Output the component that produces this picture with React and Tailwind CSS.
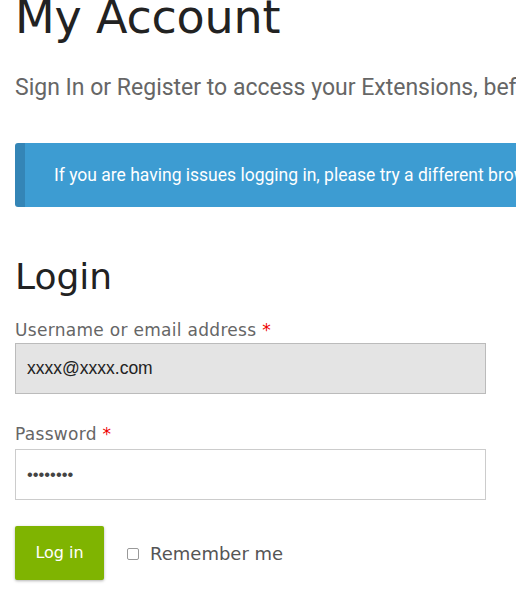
export default function App() {
  const mont = "font-['DejaVu_Sans','Noto_Sans',sans-serif]";
  const roboto = "font-['Roboto',sans-serif]";
  const arial = "font-['Liberation_Sans',Arial,sans-serif]";
  return (
    <div className="w-[516px] h-[597px] overflow-hidden bg-white">
      <div className="w-[900px] pl-[15px]">
        <h1
          className={`${mont} text-[46px] leading-[46px] text-[#222] -mt-[6px] font-normal tracking-[-0.2px]`}
        >
          My Account
        </h1>
        <p className={`${roboto} mt-[35px] text-[23px] leading-[26px] text-[#666] font-normal`}>
          Sign In or Register to access your Extensions, before you can proceed.
        </p>
        <div className="mt-[42px] h-[64px] flex items-center bg-[#3d9cd2] border-l-[10px] border-[#3485b6] rounded-l-[3px] pl-[29px]">
          <span className={`${roboto} text-white text-[17.5px]`}>
            If you are having issues logging in, please try a different browser.
          </span>
        </div>
        <h2 className={`${mont} mt-[50px] text-[36px] leading-[40px] text-[#222] font-normal`}>
          Login
        </h2>
        <form className="w-[471px]">
          <label className={`${mont} block mt-[23px] text-[17px] tracking-[0.3px] leading-[20px] text-[#666]`}>
            Username or email address <span className="text-[#e00]">*</span>
          </label>
          <div
            className={`${arial} mt-[3px] h-[51px] bg-[#e4e4e4] border border-[#bbb] flex items-center pl-[11px] text-[17.5px] text-[#222]`}
          >
            xxxx@xxxx.com
          </div>
          <label className={`${mont} block mt-[30px] text-[17px] tracking-[0.3px] leading-[20px] text-[#666]`}>
            Password <span className="text-[#e00]">*</span>
          </label>
          <div
            className={`${arial} mt-[5px] h-[51px] bg-white border border-[#ccc] flex items-center pl-[11px] text-[16.5px] text-[#444]`}
          >
            ••••••••
          </div>
          <div className="mt-[26px] flex items-center">
            <button
              type="button"
              className={`${mont} w-[89px] h-[54px] bg-[#7fb401] text-white text-[16px] rounded-[2px] shadow-[0_1px_3px_rgba(0,0,0,0.3)]`}
            >
              Log in
            </button>
            <span className="ml-[23px] mt-[2px] w-[12px] h-[12px] border border-[#999] rounded-[2px] bg-white"></span>
            <span className={`${mont} ml-[11px] text-[18px] text-[#555]`}>Remember me</span>
          </div>
        </form>
      </div>
    </div>
  );
}
